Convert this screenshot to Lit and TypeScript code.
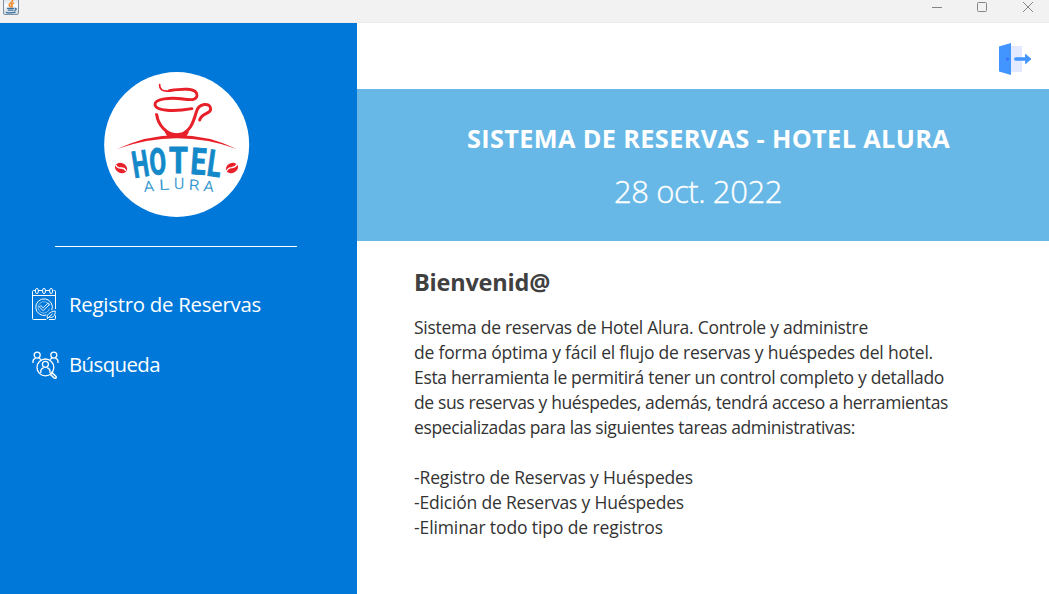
import { LitElement, html, css, svg } from "lit";
import { customElement, property } from "lit/decorators.js";

/** A single line of text whose tracking is adjusted so that it spans a given width. */
@customElement("fit-text")
class FitText extends LitElement {
  @property() text = "";
  @property({ type: Number }) span = 0;
  static styles = css`
    :host { display: block; white-space: pre; }
    .line { display: inline-block; }
  `;
  render() {
    return html`<span class="line">${this.text}</span>`;
  }
  updated() {
    const line = this.renderRoot.querySelector(".line") as HTMLElement;
    line.style.letterSpacing = "0px";
    const natural = line.getBoundingClientRect().width;
    line.style.letterSpacing = `${(this.span - natural) / this.text.length}px`;
  }
}

@customElement("hotel-logo")
class HotelLogo extends LitElement {
  static styles = css`
    :host { display: block; width: 160px; height: 160px; }
    svg { display: block; }
    .name { font: 700 110px Roboto, sans-serif; fill: #1489c9; stroke: #1489c9; stroke-width: 3; text-anchor: middle; }
    .sub { font: 300 43px Roboto, sans-serif; fill: #2a93cd; stroke: #2a93cd; stroke-width: 0.8; text-anchor: middle; }
  `;
  letter(ch: string, cls: string, x: number, y: number, angle: number, sx: number) {
    return svg`<text class=${cls} transform="translate(${x} ${y}) rotate(${angle}) scale(${sx} 1)">${ch}</text>`;
  }
  render() {
    return html`<svg width="160" height="160" viewBox="0 0 480 480">
      <circle cx="242" cy="241.5" r="217.5" fill="#fff" />
      <g fill="none" stroke="#e8202a" stroke-linecap="round">
        <path d="M191 62C190 76 200 83 218 81C246 77 303 68 303 93C303 112 280 107 252 103" stroke-width="5" />
        <path d="M220 80C258 74 303 70 303 94C303 110 281 108 260 105C224 100 177 104 177 121C177 142 236 143 288 134" stroke-width="8.5" />
        <path d="M182 152C186 183 212 212 241 212C282 212 293 172 301 144C307 118 344 113 344 136C344 151 318 145 311 168" stroke-width="9" />
      </g>
      <path d="M178 146L186 152L191 179C184 170 179 158 178 146Z" fill="#e8202a" />
      <path d="M205 202Q242 216 280 202L270 219H215Z" fill="#e8202a" />
      <path d="M63 255Q155 213 242 213Q336 213 422 255Q336 223 242 223Q155 223 63 255Z" fill="#e8202a" />
      ${this.letter("H", "name", 139, 338, -9, 0.63)}
      ${this.letter("O", "name", 188, 331, -4, 0.66)}
      ${this.letter("T", "name", 247, 328, 0, 0.83)}
      ${this.letter("E", "name", 305, 331, 4, 0.74)}
      ${this.letter("L", "name", 351, 337, 8, 0.7)}
      ${this.letter("A", "sub", 160, 382, -5, 1.12)}
      ${this.letter("L", "sub", 205, 377, -3, 1.3)}
      ${this.letter("U", "sub", 249, 375, 0, 1.08)}
      ${this.letter("R", "sub", 294, 378, 3, 1.15)}
      ${this.letter("A", "sub", 337, 382, 6, 1.12)}
      <g fill="#e8202a">
        <ellipse cx="75" cy="312" rx="19" ry="15" transform="rotate(25 75 312)" />
        <ellipse cx="408" cy="312" rx="19" ry="15" transform="rotate(-25 408 312)" />
      </g>
      <g fill="none" stroke="#fff" stroke-width="4">
        <path d="M59 302Q64 313 76 312Q86 312 90 321" />
        <path d="M391 322Q397 311 407 311Q418 310 423 301" />
      </g>
    </svg>`;
  }
}

const javaIcon = html`<svg width="16" height="16" viewBox="0 0 16 16">
  <defs><linearGradient id="g" x1="0" y1="0" x2="0" y2="1"><stop offset="0" stop-color="#d5dde5" /><stop offset=".45" stop-color="#fafbfc" /><stop offset="1" stop-color="#cbd4dc" /></linearGradient></defs>
  <path d="M.5 -2V13.2Q.5 14.5 1.8 14.5H14.2Q15.5 14.5 15.5 13.2V-2" fill="url(#g)" stroke="#7c91a5" />
  <path d="M9.6 0C10 2.6 5.8 3.2 6.2 5.2Q6.7 6.3 7.8 7.2M11 2.9Q8 4 8.8 5.4Q9.6 6.5 8.5 7.5" fill="none" stroke="#f08a2c" stroke-width="1.6" />
  <path d="M4 8.4H11.2M4.8 10.2H10.6M3 12.3Q7.8 13.5 12.6 12.1M11.8 8.4Q14 8 12.8 9.8Q12.2 10.4 11.3 10.6" fill="none" stroke="#39719d" stroke-width="1.3" />
</svg>`;

const calendarIcon = html`<svg width="26" height="32" viewBox="0 0 26 32" fill="none" stroke="#fff" stroke-width="1">
  <path d="M3.4 2.5H1.5Q.5 2.5 .5 3.5V30.5Q.5 31.5 1.5 31.5H14M21.6 2.5H22.5Q23.5 2.5 23.5 3.5V21M23.5 27.5V30.5Q23.5 31.5 22.5 31.5H17M.5 7.5H23.5M6.4 2.5H10.6M13.6 2.5H17.6" />
  <rect x="3.5" y=".5" width="2.8" height="5" rx="1.4" /><rect x="10.6" y=".5" width="2.8" height="5" rx="1.4" /><rect x="17.7" y=".5" width="2.8" height="5" rx="1.4" />
  <path d="M19.8 22.2A8.3 8.3 0 1 0 14.5 27.1" />
  <path d="M17.2 17.5A5.7 5.7 0 1 0 17.4 20.5" stroke-width=".5" />
  <path d="M7.3 19L8.8 17.5L11.2 19.8L16.2 14.9L17.7 16.4L11.2 22.6Z" stroke-width=".9" />
  <path d="M15.2 30.2C14.7 26.5 18 23.7 23.2 23C23.6 27.5 21 30.3 17.2 29.2M14.6 31.3L20.5 25.8" />
</svg>`;

const peopleIcon = html`<svg width="28" height="27" viewBox="0 0 28 27" overflow="visible" fill="none" stroke="#fff" stroke-width="1.3">
  <circle cx="5.2" cy="4.1" r="3" /><circle cx="21.8" cy="4.1" r="3" />
  <path d="M1 12V10.5Q1 8 3.6 7.4M6.8 7.4Q8.2 7.6 9 8.6M26 12V10.5Q26 8 23.4 7.4M20.2 7.4Q18.8 7.6 18 8.6" />
  <circle cx="13.4" cy="16.4" r="8.4" />
  <circle cx="13.4" cy="13.3" r="3" />
  <path d="M8.8 22V20.3Q8.8 17.6 11.6 16.9M15.2 16.9Q18 17.6 18 20.3V22" />
  <path d="M18.8 22.8L20 21.6L24 25.4Q24.6 26.8 23.6 27.2Q22.6 27.6 21.8 26.8L18.3 23.4" stroke-width="1.5" />
</svg>`;

const doorIcon = html`<svg width="32" height="32" viewBox="0 0 32 32">
  <path d="M12 3H23V29H12Z" fill="#e3e9ff" />
  <path d="M0 3.5L12 0V32L0 28.5Z" fill="#4294ff" />
  <circle cx="8.5" cy="16" r="1.6" fill="#3b6ffa" />
  <path d="M16.8 16H28" stroke="#4294ff" stroke-width="3.4" stroke-linecap="round" />
  <path d="M26.5 11.2L32 16L26.5 20.8Z" fill="#4294ff" stroke="#4294ff" stroke-width=".8" stroke-linejoin="round" />
</svg>`;

const lines: [string, number][] = [
  ["Sistema de reservas de Hotel Alura. Controle y administre", 454],
  ["de forma óptima y fácil el flujo de reservas y huéspedes del hotel.", 519],
  ["Esta herramienta le permitirá tener un control completo y detallado", 530],
  ["de sus reservas y huéspedes, además, tendrá acceso a herramientas", 534],
  ["especializadas para las siguientes tareas administrativas:", 441],
  [" ", 5],
  ["-Registro de Reservas y Huéspedes", 279],
  ["-Edición de Reservas y Huéspedes", 270],
  ["-Eliminar todo tipo de registros", 249],
];

@customElement("app-root")
class AppRoot extends LitElement {
  static styles = css`
    :host { display: flex; flex-direction: column; width: 1049px; height: 594px; overflow: hidden; background: #fff; font-family: "Open Sans", "Noto Sans", sans-serif; }
    svg { display: block; flex: none; }
    .titlebar { display: flex; justify-content: space-between; box-sizing: border-box; height: 23px; flex: none; background: #f2f2f2; border-bottom: 1px solid #ececec; padding: 0 14px 0 3px; }
    .body { display: flex; flex: 1; min-height: 0; }
    .side { width: 357px; flex: none; background: #0078d9; color: #fff; display: flex; flex-direction: column; }
    .logo { margin: 41px 0 0 96px; }
    .rule { height: 1px; width: 242px; background: #fff; margin: 22px 0 0 55px; }
    .menu { display: flex; flex-direction: column; margin-top: 27px; }
    .item { display: flex; align-items: center; height: 60px; padding-left: 32px; font-size: 20.4px; }
    .icon { width: 37px; display: flex; }
    .main { flex: 1; display: flex; flex-direction: column; }
    .top { height: 66px; display: flex; justify-content: flex-end; box-sizing: border-box; padding: 20px 18px 0 0; }
    .banner { height: 152px; box-sizing: border-box; background: #67b8e6; color: #fff; padding-top: 31px; }
    .title { font-size: 25.3px; font-weight: 700; line-height: 36px; margin-left: 110px; }
    .date { font-size: 31px; font-weight: 300; line-height: 44px; margin: 13px 0 0 257px; -webkit-text-stroke: 0.35px #fff; }
    .content { padding: 23px 0 0 57px; color: #333; }
    .hello { font-size: 23.5px; font-weight: 700; line-height: 36px; color: #404040; }
    .text { font-size: 17.5px; line-height: 25px; margin-top: 15px; }
  `;
  render() {
    return html`
      <div class="titlebar">
        ${javaIcon}
        <svg width="104" height="22" viewBox="0 0 104 22" fill="none" stroke="#858585">
          <path d="M1 7.5H11M92 2L102 12M102 2L92 12" /><rect x="46.5" y="2.5" width="9" height="9" rx="1" />
        </svg>
      </div>
      <div class="body">
        <div class="side">
          <hotel-logo class="logo"></hotel-logo>
          <div class="rule"></div>
          <div class="menu">
            <div class="item"><div class="icon">${calendarIcon}</div><fit-text text="Registro de Reservas" span="192"></fit-text></div>
            <div class="item"><div class="icon">${peopleIcon}</div><fit-text text="Búsqueda" span="91"></fit-text></div>
          </div>
        </div>
        <div class="main">
          <div class="top">${doorIcon}</div>
          <div class="banner">
            <fit-text class="title" text="SISTEMA DE RESERVAS - HOTEL ALURA" span="483"></fit-text>
            <fit-text class="date" text="28 oct. 2022" span="168"></fit-text>
          </div>
          <div class="content">
            <fit-text class="hello" text="Bienvenid@" span="136"></fit-text>
            <div class="text">${lines.map(([t, w]) => html`<fit-text text=${t} span=${w}></fit-text>`)}</div>
          </div>
        </div>
      </div>
    `;
  }
}
